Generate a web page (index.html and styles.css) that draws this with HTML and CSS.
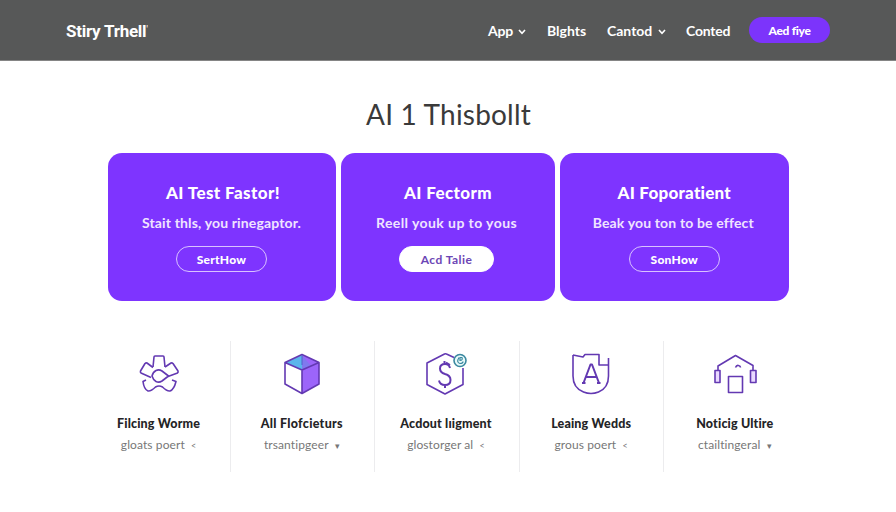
FILE: index.html
```html
<!DOCTYPE html>
<html lang="en">
<head>
<meta charset="utf-8">
<title>Stiry Trhell</title>
<link rel="stylesheet" href="styles.css">
</head>
<body>
<header class="topbar">
  <a class="brand">Stiry Trhell<span class="tick">'</span></a>
  <nav class="nav">
    <a class="nav-link app">App <svg class="chevron" viewBox="0 0 8 6"><path d="M1 1l3 3.400L7 1"/></svg></a>
    <a class="nav-link blights">Blghts</a>
    <a class="nav-link canted">Cantod <svg class="chevron" viewBox="0 0 8 6"><path d="M1 1l3 3.400L7 1"/></svg></a>
    <a class="nav-link conted">Conted</a>
    <a class="nav-button"><span>Aed fiye</span></a>
  </nav>
</header>
<main>
  <h1 class="title">AI 1 Thisbollt</h1>
  <section class="cards">
    <article class="card first">
      <h2>AI Test Fastor!</h2>
      <p>Stait thls, you rinegaptor.</p>
      <a class="button"><span>SertHow</span></a>
    </article>
    <article class="card second">
      <h2>AI Fectorm</h2>
      <p>Reell youk up to yous</p>
      <a class="button solid"><span>Acd Talie</span></a>
    </article>
    <article class="card third">
      <h2>AI Foporatient</h2>
      <p>Beak you ton to be effect</p>
      <a class="button"><span>SonHow</span></a>
    </article>
  </section>
  <section class="features">
    <article class="feature f1">
      <svg class="icon" viewBox="0 0 48 48">
        <path d="M18 17l1-10q0-1 1-1h8q1 0 1 1l1 10"/>
        <path d="M18 17.500l-6-4.500q-1-.5-2 .5l-4.500 7.500q-.5 1 .5 2l10 4.500M30 17l6-4q1-.5 2 .5l5 7.500q.5 1-.5 2L33 26.500"/>
        <path d="M17 26q1-4 4-5.500 3-1.500 6 .5l6.500 5L27 31q-3 2-6 .5-3-2-4-5.500z"/>
        <path d="M11 30l-3 1.500q1 8 5 9.500 3 .5 7.500-4 3.500-2 7 0 4.500 4.500 7.500 4 4-1.500 6-9.500l-4-1.500"/>
      </svg>
      <h3>Filcing Worme</h3>
      <p>gloats poert <small>&lt;</small></p>
    </article>
    <article class="feature f2">
      <svg class="icon" viewBox="0 0 48 48">
        <path class="no-stroke cyan" d="M24 5L7 12.500 24 20z"/>
        <path class="no-stroke violet" d="M24 5l17 7v22l-17 9V20z"/>
        <path class="no-stroke blue" d="M24 5v15l9-4z"/>
        <path d="M24 4.500l17 8V34l-17 9.500L7 34V12.500zM7 12.500L24 20l17-7.500M24 20v23.500"/>
        <path class="ridge" d="M24 5v10"/>
      </svg>
      <h3>All Flofcieturs</h3>
      <p>trsantipgeer <small>▾</small></p>
    </article>
    <article class="feature f3">
      <svg class="icon" viewBox="0 0 48 48">
        <path d="M32 7.500l-7.500-3.500q-1-.5-2 0L5 13v21.500L23 44 41 34.500V18"/>
        <path class="dollar" d="M28 18q-1-4-5-4-5 0-5 4.500 0 4 5 5.500 5.500 1.500 5.500 6 0 5-5.500 5-5 0-6-4.500M22.500 11v3M23 35v3M24 12.500l4 2.500"/>
        <circle class="badge" cx="38" cy="10.500" r="6"/>
        <path class="badge-mark" d="M37 7.500q-3 5 1 6 3 0 3-2M38 7.500h2q1 3-2 3z"/>
      </svg>
      <h3>Acdout lıigment</h3>
      <p>glostorger al <small>&lt;</small></p>
    </article>
    <article class="feature f4">
      <svg class="icon" viewBox="0 0 48 48">
        <path d="M6 5l10 2 2-2.500h14V15h9.500M41.500 8v18q0 12-10 16-7.500 3-15 0Q6 38 6 26V5"/>
        <path class="letter" d="M16.500 33l7-18.500h1.500L32 33M19 27h11M15 33h3.500M30 33h3.500"/>
      </svg>
      <h3>Leaing Wedds</h3>
      <p>grous poert <small>&lt;</small></p>
    </article>
    <article class="feature f5">
      <svg class="icon" viewBox="0 0 48 48">
        <path d="M7 20v-4L24.500 5.500 42 15.500V20"/>
        <rect class="tint" x="4" y="20.500" width="5" height="12"/>
        <rect class="tint" x="39.500" y="20.500" width="5.500" height="12"/>
        <path d="M17.500 26.500h14v16h-14zM24.500 17.500q1-2.500 3-2 2 .3 2 2"/>
      </svg>
      <h3>Noticig Ultire</h3>
      <p>ctailtingeral <small>▾</small></p>
    </article>
  </section>
</main>
</body>
</html>
```
FILE: styles.css
```css
* { box-sizing: border-box; }
body {
  margin: 0;
  height: 512px;
  overflow: hidden;
  background: #fff;
  font-family: Lato, "Open Sans", sans-serif;
  font-variant-ligatures: none;
  white-space: nowrap;
}
h1, h2, h3, p { margin: 0; }
.topbar {
  display: flex;
  align-items: center;
  justify-content: space-between;
  height: 61px;
  padding: 0 66px;
  background: #575858;
  border-bottom: 1px solid #858585;
  color: #fff;
}
.brand { font: 700 17px/24px Roboto, sans-serif; letter-spacing: -0.25px; }
.tick { font-weight: 400; font-size: 10px; vertical-align: 4px; }
.nav { display: flex; align-items: center; }
.nav-link { padding-top: 1px; font-size: 14px; font-weight: 700; line-height: 20px; }
.app { width: 59px; letter-spacing: -0.2px; }
.blights { width: 60px; }
.canted { width: 79px; }
.conted { width: 63px; letter-spacing: -0.2px; }
.chevron {
  width: 8px;
  height: 6px;
  margin-left: 2px;
  vertical-align: 1px;
  fill: none;
  stroke: #fff;
  stroke-width: 1.6;
}
.nav-button {
  display: flex;
  align-items: center;
  justify-content: center;
  width: 81px;
  height: 26px;
  border-radius: 13px;
  background: #7c34fb;
  font-size: 12px;
  font-weight: 900;
  letter-spacing: -0.3px;
}
.title {
  padding: 35px 0 0 1px;
  text-align: center;
  font: 400 28px/36px Lato, sans-serif;
  letter-spacing: 0.2px;
  color: #3a3a3a;
}
.cards {
  display: grid;
  grid-template-columns: 228px 214px 228.5px;
  gap: 5px;
  margin: 21px 0 0 108px;
}
.card {
  display: flex;
  flex-direction: column;
  align-items: center;
  height: 148px;
  padding-top: 29px;
  border-radius: 14px;
  background: #7e34ff;
  color: #fff;
}
.card h2 { font-size: 17px; font-weight: 900; line-height: 22px; letter-spacing: 0.4px; }
.card p { margin-top: 9px; font-size: 14px; font-weight: 700; line-height: 20px; color: #f0e4ff; letter-spacing: 0.15px; }
.first h2 { padding-left: 3px; }
.second h2 { padding-left: 3px; }
.first { padding-right: 1px; }
.second { padding-right: 3px; }
.second p { letter-spacing: 0.42px; }
.third h2 { letter-spacing: 0.25px; }
.third p { padding-right: 2px; }
.button {
  display: flex;
  align-items: center;
  justify-content: center;
  width: 91px;
  height: 26px;
  margin-top: 13px;
  border: 1px solid #d9c2ff;
  border-radius: 13px;
  font-size: 12px;
  font-weight: 900;
  letter-spacing: 0.25px;
}
.solid { width: 95px; border-color: #fff; background: #fff; color: #6c46b5; font-weight: 700; letter-spacing: 0.45px; }
.features {
  display: grid;
  grid-template-columns: repeat(5, 144.200px);
  margin: 40px 0 0 87px;
}
.feature {
  display: flex;
  flex-direction: column;
  align-items: center;
  height: 131px;
  padding-top: 9px;
  border-right: 1px solid #ececee;
}
.f2, .f3 { padding-right: 2px; }
.feature:last-child { border-right: 0; padding-right: 2px; }
.icon {
  width: 48px;
  height: 48px;
  fill: none;
  stroke: #6339b2;
  stroke-width: 1.6;
  stroke-linejoin: round;
}
.icon .no-stroke { stroke: none; }
.icon .cyan { fill: #5bb5ec; }
.icon .blue { fill: #8079ee; }
.icon .violet { fill: #9c65fa; }
.icon .ridge { stroke: #5260c9; stroke-width: 1; }
.icon .dollar, .icon .letter { stroke-width: 2; }
.icon .badge { fill: #e8fafa; stroke: #3b88a0; }
.icon .badge-mark { stroke: #3b88a0; stroke-width: 1.2; }
.icon .tint { fill: #ead9ff; }
.feature h3 { margin-top: 16px; font-size: 12.500px; font-weight: 900; line-height: 20px; letter-spacing: 0.15px; color: #242426; }
.f2 h3 { letter-spacing: 0.3px; }
.feature p { margin-top: 2px; font-size: 12px; line-height: 18px; letter-spacing: 0.1px; color: #777; }
.feature small { margin-left: 3px; font-size: 9px; }
```
